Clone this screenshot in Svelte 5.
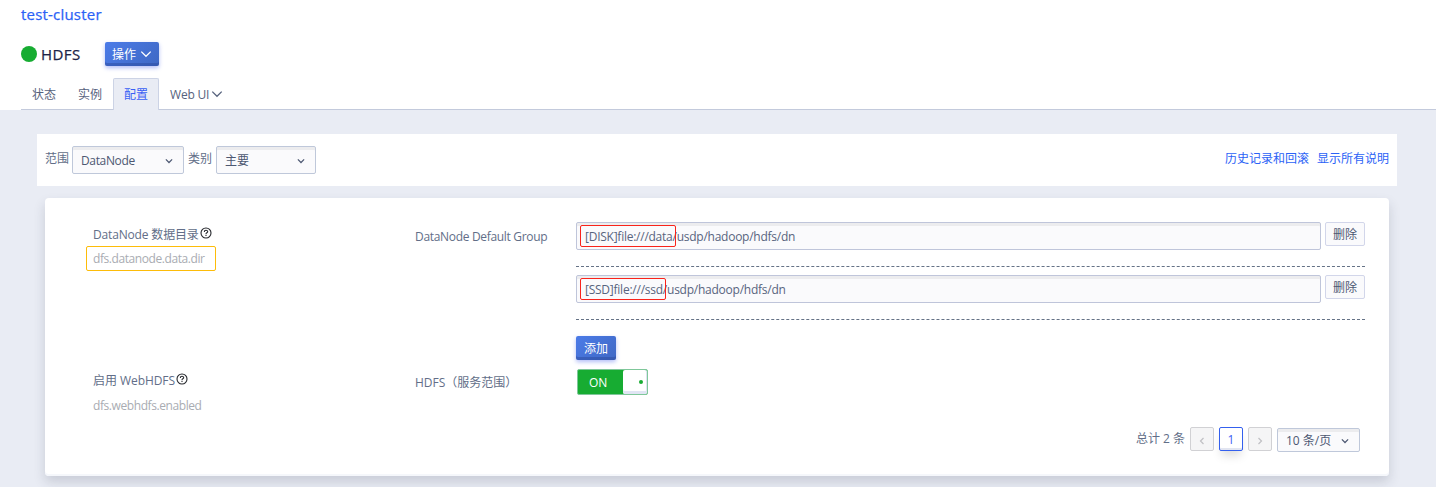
<script>
  const paths = [
    { value: '[DISK]file:///data/usdp/hadoop/hdfs/dn', width: 96, tracking: -0.25 },
    { value: '[SSD]file:///ssd/usdp/hadoop/hdfs/dn', width: 86, tracking: -0.24 }
  ];
</script>

{#snippet chevron(size, weight)}
  <svg class="chev" width={size} height={size} viewBox="0 0 12 12" fill="none" stroke="currentColor" stroke-width={weight}><path d="M1.3 3.6 6 8.3l4.7-4.7" /></svg>
{/snippet}

{#snippet help()}
  <svg class="help" width="12" height="12" viewBox="0 0 12 12" fill="none" stroke="#26282d"><circle cx="6" cy="6" r="5" stroke-width="1.1" /><path d="M4.3 4.9c0-2.2 3.4-2.2 3.4-.2 0 1.1-1.7 1.1-1.7 2.2" stroke-width="1.1" /><path d="M6 7.8v1.1" stroke-width="1.1" /></svg>
{/snippet}

<div class="page">
  <header>
    <div class="cluster"><a href="#cluster">test-cluster</a></div>
    <div class="service">
      <i class="dot"></i>
      <h1>HDFS</h1>
      <button class="primary ops">操作{@render chevron(12, 1.3)}</button>
    </div>
    <nav>
      <span class="tab">状态</span>
      <span class="tab">实例</span>
      <span class="tab active">配置</span>
      <span class="tab web"><span class="webt">Web UI</span>{@render chevron(12, 1.3)}</span>
    </nav>
  </header>

  <section class="filters">
    <span class="flabel">范围</span>
    <div class="select scope"><span class="dn">DataNode</span>{@render chevron(8, 1.8)}</div>
    <span class="flabel">类别</span>
    <div class="select kind"><span>主要</span>{@render chevron(8, 1.8)}</div>
    <div class="links"><a href="#history">历史记录和回滚</a><a href="#all">显示所有说明</a></div>
  </section>

  <section class="card">
    <div class="row first">
      <div class="name">
        <div class="title"><span class="t1">DataNode 数据目录</span>{@render help()}</div>
        <div class="key boxed">dfs.datanode.data.dir</div>
      </div>
      <div class="group g1">DataNode Default Group</div>
      <div class="values">
        {#each paths as p}
          <div class="value">
            <div class="input"><i class="mark" style="width: {p.width}px"></i><span style="letter-spacing: {p.tracking}px">{p.value}</span></div>
            <button class="delete">删除</button>
          </div>
        {/each}
        <button class="primary add">添加</button>
      </div>
    </div>
    <div class="row second">
      <div class="name">
        <div class="title"><span class="t2">启用 WebHDFS</span>{@render help()}</div>
        <div class="key">dfs.webhdfs.enabled</div>
      </div>
      <div class="group">HDFS（服务范围）</div>
      <div class="values"><div class="switch"><span>ON</span><b><i></i></b></div></div>
    </div>
    <footer>
      <span>总计 2 条</span>
      <button class="pg off"><svg width="6" height="8" viewBox="0 0 6 8" fill="none" stroke="#c0c0c4" stroke-width="1.2"><path d="M4.5 1 1.5 4l3 3" /></svg></button>
      <button class="pg current">1</button>
      <button class="pg off"><svg width="6" height="8" viewBox="0 0 6 8" fill="none" stroke="#c0c0c4" stroke-width="1.2"><path d="m1.5 1 3 3-3 3" /></svg></button>
      <div class="select size"><span>10 条/页</span>{@render chevron(8, 1.8)}</div>
    </footer>
  </section>
</div>

<style>
  :global(body) { background: #e9ecf4; }
  .page, .page * { box-sizing: border-box; }
  .page {
    height: 487px; overflow: hidden; background: #e9ecf4;
    font: 12px/20px "Open Sans", "Noto Sans CJK SC", sans-serif;
    color: #626e88; white-space: nowrap;
  }
  button { font: inherit; margin: 0; padding: 0; }
  a { color: #2b62f6; text-decoration: none; }
  svg { display: block; flex: none; }
  header { height: 110px; background: #fff; padding-left: 21px; display: flex; flex-direction: column; }
  .cluster { height: 42px; padding-top: 4px; font-size: 15px; line-height: 21px; letter-spacing: 0.2px; -webkit-text-stroke: 0.25px #2b62f6; }
  .service { height: 24px; display: flex; align-items: center; }
  .dot { width: 16px; height: 16px; border-radius: 50%; background: #17ac32; }
  h1 { margin: 0 0 0 4px; width: 64px; padding-top: 1px; font-size: 15px; line-height: 23px; font-weight: 400; letter-spacing: 0.4px; color: #1c2448; -webkit-text-stroke: 0.25px #1c2448; }
  .primary {
    display: flex; align-items: center; justify-content: center; height: 24px; padding-top: 2px;
    border: 0; border-radius: 2px; color: #fff;
    background: linear-gradient(135deg, #4b7be8, #3f68c4);
    box-shadow: inset 0 -3px 0 rgba(42, 72, 154, 0.45), 0 2px 4px rgba(66, 92, 235, 0.4);
  }
  .ops { width: 54px; gap: 4px; }
  .ops .chev { margin-top: -2px; }
  nav { display: flex; height: 32px; margin-top: 12px; border-bottom: 1px solid #c3cadc; }
  .tab { width: 46px; height: 32px; line-height: 33px; text-align: center; color: #56627d; }
  .tab.active { color: #3a60f4; line-height: 31px; background: #e9ecf4; border: 1px solid #ccd3e5; border-bottom: 0; border-radius: 2px 2px 0 0; }
  .web { display: flex; align-items: center; width: auto; padding-left: 11px; gap: 2px; }
  .webt { letter-spacing: -0.2px; }
  .dn { letter-spacing: -0.35px; }

  .filters { display: flex; height: 52px; margin: 24px 39px 0 37px; padding: 12px 8px; background: #fff; }
  .flabel { width: 27px; line-height: 26px; }
  .select {
    display: flex; align-items: center; justify-content: space-between; height: 28px;
    padding: 1px 10px 0 8px; color: #4d5872; background: #fafafc;
    border: 1px solid #bfc8da; border-radius: 2px; box-shadow: inset 0 3px 0 #ececee;
  }
  .scope { width: 112px; margin-right: 4px; }
  .kind { width: 100px; margin-left: 1px; }
  .links { margin-left: auto; display: flex; gap: 8px; line-height: 26px; }

  .card {
    height: 278px; margin: 12px 47px 0 45px; padding: 24px 24px 0 41px; background: #fff; border-radius: 4px;
    box-shadow: inset 0 -2px 0 #f5f7fb, 0 6px 12px rgba(40, 45, 70, 0.17);
  }
  .row { display: grid; grid-template-columns: 329px 161px 1fr; }
  .first { height: 146px; }
  .second { height: 59px; }
  .title { display: flex; padding-left: 7px; height: 24px; line-height: 25px; }
  .t1 { letter-spacing: -0.16px; }
  .t2 { letter-spacing: -0.06px; }
  .help { margin: 5px 0 0 1px; }
  .key { display: flex; align-items: center; width: 130px; height: 25px; padding-left: 7px; color: #a9acb2; letter-spacing: -0.42px; }
  .boxed { border: 1px solid #fdbc09; border-radius: 2px; padding-left: 6px; }
  .group { line-height: 29px; }
  .g1 { letter-spacing: -0.32px; }
  .value { display: flex; gap: 4px; height: 45px; margin-bottom: 8px; border-bottom: 1px dashed #657286; }
  .input {
    position: relative; display: flex; align-items: center; width: 745px; height: 28px; padding: 1px 0 0 8px;
    border: 1px solid #bfc5da; border-radius: 2px; background: #fafafc; box-shadow: inset 0 3px 0 #ececee; color: #58647e;
  }
  .mark { position: absolute; left: 3px; top: 2px; height: 22px; border: 1px solid #f9231b; border-radius: 2px; }
  .delete { width: 40px; height: 24px; padding-top: 1px; border: 1px solid #d2d6ea; border-radius: 2px; background: #fafafc; color: #4d5872; }
  .add { width: 40px; }
  .values .add { margin-top: 16px; }
  .second .title { height: 25px; }
  .second .values { padding: 1px 0 0 1px; }
  .switch { display: flex; width: 71px; height: 26px; border: 1px solid #7fc79a; border-radius: 2px; background: #17ac32; color: #fff; line-height: 25px; }
  .switch span { width: 45px; padding-left: 11px; }
  .switch b { display: flex; align-items: center; justify-content: flex-end; width: 24px; height: 24px; padding-right: 4px; background: #fff; box-shadow: inset 0 -3px 0 #e1e5f4, inset -1px 0 #dce3f0; border-radius: 2px; }
  .switch i { width: 4px; height: 4px; border-radius: 50%; background: #17ac32; }
  footer { display: flex; justify-content: flex-end; padding-right: 5px; gap: 5px; line-height: 24px; }
  .pg { display: flex; align-items: center; justify-content: center; width: 24px; height: 24px; border: 1px solid #d1d1d4; border-radius: 2px; background: #f5f5f6; }
  .off { padding-top: 3px; }
  .current { padding-top: 1px; border-color: #3460ee; color: #3c61f5; background: #fff; box-shadow: inset 0 -2px 0 #e2e5f1, 0 7px 10px -2px rgba(0, 0, 0, 0.13); }
  .size { width: 83px; height: 24px; margin-top: 1px; }
</style>
